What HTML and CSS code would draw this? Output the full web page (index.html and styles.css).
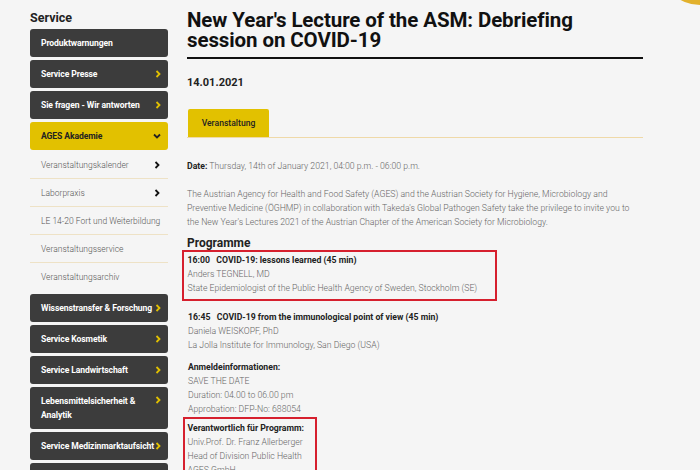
FILE: index.html
```html
<!DOCTYPE html>
<html lang="de">
<head>
<meta charset="utf-8">
<title>New Year's Lecture of the ASM</title>
<link rel="stylesheet" href="styles.css">
</head>
<body>
<div class="corner"></div>
<div class="page">
  <aside class="sidebar">
    <h2 class="side-title">Service</h2>
    <nav class="nav">
      <a class="btn">Produktwarnungen</a>
      <a class="btn">Service Presse<svg class="chev" viewBox="0 0 6 8"><polyline points="1.5,1 4.5,4 1.5,7"/></svg></a>
      <a class="btn">Sie fragen - Wir antworten<svg class="chev" viewBox="0 0 6 8"><polyline points="1.5,1 4.5,4 1.5,7"/></svg></a>
      <a class="btn active">AGES Akademie<svg class="chev down" viewBox="0 0 8 6"><polyline points="1,1.5 4,4.5 7,1.5"/></svg></a>
      <ul class="sub">
        <li>Veranstaltungskalender<svg class="chev dark" viewBox="0 0 6 8"><polyline points="1.5,1 4.5,4 1.5,7"/></svg></li>
        <li>Laborpraxis<svg class="chev dark" viewBox="0 0 6 8"><polyline points="1.5,1 4.5,4 1.5,7"/></svg></li>
        <li>LE 14-20 Fort und Weiterbildung</li>
        <li>Veranstaltungsservice</li>
        <li class="last">Veranstaltungsarchiv</li>
      </ul>
      <a class="btn">Wissenstransfer &amp; Forschung<svg class="chev" viewBox="0 0 6 8"><polyline points="1.5,1 4.5,4 1.5,7"/></svg></a>
      <a class="btn">Service Kosmetik<svg class="chev" viewBox="0 0 6 8"><polyline points="1.5,1 4.5,4 1.5,7"/></svg></a>
      <a class="btn">Service Landwirtschaft<svg class="chev" viewBox="0 0 6 8"><polyline points="1.5,1 4.5,4 1.5,7"/></svg></a>
      <a class="btn tall">Lebensmittelsicherheit &amp;<br>Analytik<svg class="chev" viewBox="0 0 6 8"><polyline points="1.5,1 4.5,4 1.5,7"/></svg></a>
      <a class="btn">Service Medizinmarktaufsicht<svg class="chev" viewBox="0 0 6 8"><polyline points="1.5,1 4.5,4 1.5,7"/></svg></a>
      <a class="btn">Service Ärzte<svg class="chev" viewBox="0 0 6 8"><polyline points="1.5,1 4.5,4 1.5,7"/></svg></a>
    </nav>
  </aside>
  <main class="main">
    <h1 class="title">New Year's Lecture of the ASM: Debriefing session on COVID-19</h1>
    <p class="date">14.01.2021</p>
    <div class="tabs"><span class="tab">Veranstaltung</span></div>
    <p class="txt"><b>Date:</b> Thursday, 14th of January 2021, 04:00 p.m. - 06:00 p.m.</p>
    <p class="txt para">The Austrian Agency for Health and Food Safety (AGES) and the Austrian Society for Hygiene, Microbiology and Preventive Medicine (ÖGHMP) in collaboration with Takeda's Global Pathogen Safety take the privilege to invite you to the New Year's Lectures 2021 of the Austrian Chapter of the American Society for Microbiology.</p>
    <h3 class="prog">Programme</h3>
    <div class="item mark1">
      <p class="txt"><b>16:00&nbsp;&nbsp;&nbsp;COVID-19: lessons learned (45 min)</b></p>
      <p class="txt">Anders TEGNELL, MD</p>
      <p class="txt">State Epidemiologist of the Public Health Agency of Sweden, Stockholm (SE)</p>
    </div>
    <div class="item second">
      <p class="txt"><b>16:45&nbsp;&nbsp;&nbsp;COVID-19 from the immunological point of view (45 min)</b></p>
      <p class="txt">Daniela WEISKOPF, PhD</p>
      <p class="txt">La Jolla Institute for Immunology, San Diego (USA)</p>
    </div>
    <div class="item third">
      <p class="txt"><b>Anmeldeinformationen:</b></p>
      <p class="txt">SAVE THE DATE</p>
      <p class="txt">Duration: 04.00 to 06.00 pm</p>
      <p class="txt">Approbation: DFP-No: 688054</p>
    </div>
    <div class="item mark2">
      <p class="txt"><b>Verantwortlich für Programm:</b></p>
      <p class="txt">Univ.Prof. Dr. Franz Allerberger</p>
      <p class="txt">Head of Division Public Health</p>
      <p class="txt">AGES GmbH</p>
    </div>
  </main>
</div>
</body>
</html>
```
FILE: styles.css
```css
* { box-sizing: border-box; }
html, body { margin: 0; padding: 0; }
body {
  background: #f5f5f5;
  font-family: Roboto, "Liberation Sans", Arial, sans-serif;
  color: #222;
  width: 700px;
  height: 470px;
  overflow: hidden;
  position: relative;
}
.corner {
  position: absolute;
  right: -40px;
  top: -75px;
  width: 80px;
  height: 80px;
  border-radius: 50%;
  background: #e2b12c;
}
.page {
  display: flex;
  padding-left: 30px;
  gap: 19px;
}
.sidebar { width: 138px; flex: none; }
.side-title {
  margin: 0;
  padding-top: 10px;
  font-size: 12.5px;
  line-height: 16px;
  font-weight: 700;
  color: #222;
  height: 29px;
}
.nav { display: flex; flex-direction: column; gap: 3px; }
.btn {
  display: flex;
  align-items: center;
  justify-content: space-between;
  height: 28px;
  padding: 0 7px 0 11px;
  background: #3c3c3c;
  border-radius: 3px;
  color: #fff;
  font-size: 8.6px;
  font-weight: 700;
  letter-spacing: -0.1px;
}
.btn.tall {
  height: 42px;
  align-items: flex-start;
  line-height: 14px;
  padding-top: 7px;
}
.btn.tall .chev { margin-top: 2px; }
.btn.active { background: #e2c100; color: #222; }
.chev {
  width: 6px;
  height: 8px;
  flex: none;
  fill: none;
  stroke: #e2c100;
  stroke-width: 1.8;
}
.chev.down { width: 8px; height: 6px; stroke: #222; }
.chev.dark { stroke: #111; margin-right: 1px; }
.sub {
  list-style: none;
  margin: -3px 0 0;
  padding: 0;
}
.sub li {
  display: flex;
  justify-content: space-between;
  align-items: center;
  height: 28px;
  padding: 0 7px 0 11px;
  border-bottom: 1px solid #eee2c6;
  font-size: 8.5px;
  font-weight: 300;
  color: #555;
  white-space: nowrap;
}
.sub li:first-child { height: 29px; padding-top: 1px; }
.sub li.last { border-bottom: none; height: 28px; }
.main { width: 456px; flex: none; padding-top: 10px; }
.title {
  margin: 0;
  font-size: 20.5px;
  line-height: 20px;
  font-weight: 700;
  color: #111;
  padding-bottom: 7px;
  border-bottom: 2px solid #111;
  letter-spacing: -0.1px;
}
.date {
  margin: 17px 0 0;
  font-size: 11px;
  line-height: 14px;
  font-weight: 700;
  color: #222;
}
.tabs {
  margin-top: 19px;
  border-bottom: 1px solid #efd9a8;
  display: flex;
  padding-left: 1px;
}
.tab {
  display: flex;
  align-items: center;
  justify-content: center;
  width: 81px;
  height: 28px;
  background: #e2c100;
  border-radius: 2px 2px 0 0;
  font-size: 8.6px;
  color: #222;
  font-weight: 500;
}
.txt {
  margin: 0;
  font-size: 8.7px;
  line-height: 14px;
  font-weight: 300;
  color: #666;
}
.txt b { color: #222; font-weight: 700; }
.tabs + .txt { margin-top: 21px; }
.para { margin-top: 14px; }
.prog {
  margin: 7px 0 0;
  font-size: 12px;
  line-height: 14px;
  font-weight: 700;
  color: #222;
}
.item { padding-left: 1px; }
.mark1 {
  margin: 0 0 0 -5px;
  width: 315px;
  border: 2.5px solid #d6202e;
  padding: 1px 0 4px 3.5px;
}
.second { margin-top: 9px; }
.third { margin-top: 8px; }
.mark2 {
  margin: 1px 0 0 -4px;
  width: 134px;
  border: 2.5px solid #d6202e;
  padding: 2px 0 0 2.5px;
}
```
